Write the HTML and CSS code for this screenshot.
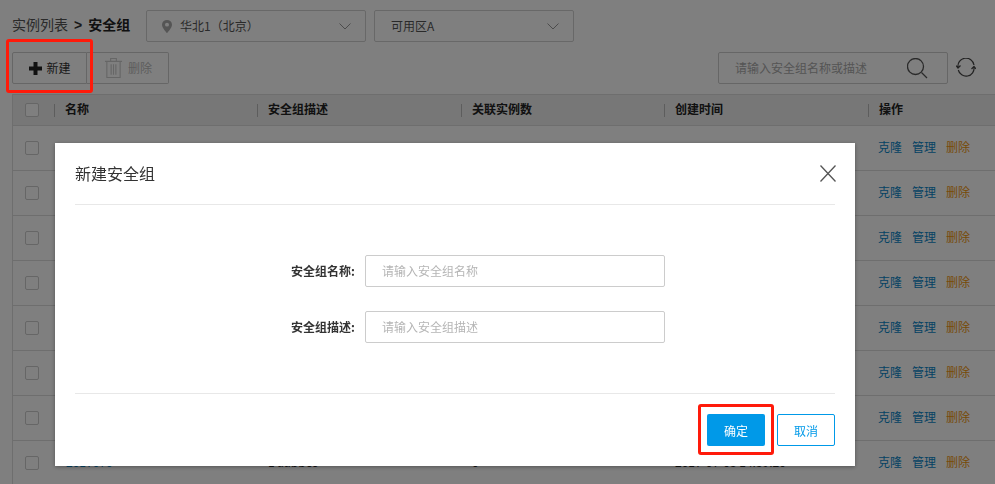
FILE: index.html
```html
<!DOCTYPE html>
<html lang="zh-CN">
<head>
  <meta charset="UTF-8" />
  <title>安全组</title>
  <meta name="viewport" content="width=device-width, initial-scale=1.0">
  <link rel="stylesheet" href="styles.css">
</head>
<body>

  <div class="topbar">
    <div class="crumb">实例列表<b>&gt;</b><strong>安全组</strong></div>
    <div class="select select-region">
      <svg class="pin" width="10" height="13" viewBox="0 0 10 14" preserveAspectRatio="none"><path d="M5 0a5 5 0 0 0-5 5c0 3.500 5 9 5 9s5-5.500 5-9a5 5 0 0 0-5-5zm0 7a2 2 0 1 1 0-4 2 2 0 0 1 0 4z"/></svg>
      <span>华北1（北京）</span>
      <svg class="caret" width="12" height="7" viewBox="0 0 12 7"><path d="M.5.500L6 6l5.500-5.500"/></svg>
    </div>
    <div class="select select-zone">
      <span>可用区A</span>
      <svg class="caret" width="12" height="7" viewBox="0 0 12 7"><path d="M.5.500L6 6l5.500-5.500"/></svg>
    </div>
  </div>

  <div class="toolbar">
    <button class="tool">
      <svg width="13" height="13" viewBox="0 0 13 13"><path d="M4.500 0h4v4.500H13v4H8.500V13h-4V8.500H0v-4h4.500z"/></svg>
      <span>新建</span>
    </button>
    <button class="tool tool-off">
      <svg width="19" height="22" viewBox="0 0 20 22"><path d="M1 4h18M7 4V1h6v3M3 4v17h14V4M7.500 7v11M10 7v11M12.500 7v11"/></svg>
      <span>删除</span>
    </button>
    <div class="search">
      <span>请输入安全组名称或描述</span>
      <svg width="21" height="21" viewBox="0 0 21 21"><circle cx="8.500" cy="8.500" r="8"/><path d="M14.500 14.500l5.500 5.500"/></svg>
    </div>
    <svg class="refresh" width="20" height="19" viewBox="0 0 20 19"><path d="M18 7A8 8 0 0 0 2 9.500M2.300 12A8 8 0 0 0 18 9M0 7.500l2 2.500 2.500-2.500M15.500 11L18 8.500l2 2.500"/></svg>
  </div>

  <div class="table">
    <div class="row head">
      <div class="cell"><i class="check"></i></div>
      <div class="cell"><i class="sep"></i><span>名称</span></div>
      <div class="cell"><i class="sep"></i><span>安全组描述</span></div>
      <div class="cell"><i class="sep"></i><span>关联实例数</span></div>
      <div class="cell"><i class="sep"></i><span>创建时间</span></div>
      <div class="cell"><i class="sep"></i><span>操作</span></div>
    </div>
    <div class="row">
      <div class="cell"><i class="check"></i></div><div class="cell"></div><div class="cell"></div><div class="cell"></div><div class="cell"></div>
      <div class="cell ops"><a>克隆</a><a>管理</a><a class="del">删除</a></div>
    </div>
    <div class="row">
      <div class="cell"><i class="check"></i></div><div class="cell"></div><div class="cell"></div><div class="cell"></div><div class="cell"></div>
      <div class="cell ops"><a>克隆</a><a>管理</a><a class="del">删除</a></div>
    </div>
    <div class="row">
      <div class="cell"><i class="check"></i></div><div class="cell"></div><div class="cell"></div><div class="cell"></div><div class="cell"></div>
      <div class="cell ops"><a>克隆</a><a>管理</a><a class="del">删除</a></div>
    </div>
    <div class="row">
      <div class="cell"><i class="check"></i></div><div class="cell"></div><div class="cell"></div><div class="cell"></div><div class="cell"></div>
      <div class="cell ops"><a>克隆</a><a>管理</a><a class="del">删除</a></div>
    </div>
    <div class="row">
      <div class="cell"><i class="check"></i></div><div class="cell"></div><div class="cell"></div><div class="cell"></div><div class="cell"></div>
      <div class="cell ops"><a>克隆</a><a>管理</a><a class="del">删除</a></div>
    </div>
    <div class="row">
      <div class="cell"><i class="check"></i></div><div class="cell"></div><div class="cell"></div><div class="cell"></div><div class="cell"></div>
      <div class="cell ops"><a>克隆</a><a>管理</a><a class="del">删除</a></div>
    </div>
    <div class="row">
      <div class="cell"><i class="check"></i></div><div class="cell"></div><div class="cell"></div><div class="cell"></div><div class="cell"></div>
      <div class="cell ops"><a>克隆</a><a>管理</a><a class="del">删除</a></div>
    </div>
    <div class="row">
      <div class="cell"><i class="check"></i></div>
      <div class="cell"><a class="name">2017070</a></div>
      <div class="cell txt">1 aabbcc</div>
      <div class="cell txt">0</div>
      <div class="cell txt">2017-07-03 14:39:20</div>
      <div class="cell ops"><a>克隆</a><a>管理</a><a class="del">删除</a></div>
    </div>
  </div>

  <div class="mask"></div>

  <div class="modal">
    <div class="modal-head">
      <span>新建安全组</span>
      <svg width="16" height="17" viewBox="0 0 16 17"><path d="M.5.500l15 16M15.500.500l-15 16"/></svg>
    </div>
    <div class="modal-body">
      <div class="field">
        <label>安全组名称:</label>
        <div class="input">请输入安全组名称</div>
      </div>
      <div class="field">
        <label>安全组描述:</label>
        <div class="input">请输入安全组描述</div>
      </div>
    </div>
    <div class="modal-foot">
      <button class="btn btn-ok">确定</button>
      <button class="btn btn-cancel">取消</button>
    </div>
  </div>

  <div class="mark mark-new"></div>
  <div class="mark mark-ok"></div>

</body>
</html>
```

FILE: styles.css
```css
html, body { height: 100%; }
body {
  margin: 0;
  padding: 10px 0 0 12px;
  box-sizing: border-box;
  overflow: hidden;
  background: #fff;
  color: #333;
  font-family: "Noto Sans CJK SC", "Liberation Sans", sans-serif;
  font-size: 12px;
}

.topbar { display: flex; align-items: center; height: 32px; }
.crumb { width: 134px; padding-bottom: 4px; font-size: 14px; color: #555; white-space: nowrap; }
.crumb b { font-family: "Liberation Sans", sans-serif; margin: 0 6px; color: #333; }
.crumb strong { color: #222; }

.select {
  display: flex;
  align-items: center;
  height: 32px;
  box-sizing: border-box;
  border: 1px solid #d0d0d0;
  border-radius: 2px;
  color: #555;
}
.select span { padding-bottom: 2px; }
.select .caret { margin-left: auto; margin-right: 14px; fill: none; stroke: #999; stroke-width: 1; }
.select-region { width: 220px; padding-left: 15px; margin-right: 8px; }
.select-region .pin { fill: #aaa; margin-right: 8px; }
.select-zone { width: 200px; padding-left: 16px; }

.toolbar { display: flex; align-items: center; height: 32px; margin-top: 10px; }
.tool {
  display: flex;
  align-items: center;
  justify-content: center;
  gap: 4px;
  width: 75px;
  height: 32px;
  padding: 0 0 0 1px;
  border: 1px solid #ccc;
  border-radius: 2px 0 0 2px;
  background: #fff;
  color: #333;
  font: inherit;
}
.tool span { padding-bottom: 2px; }
.tool svg { fill: #222; }
.tool-off {
  width: 82px;
  border-left: none;
  border-radius: 0 2px 2px 0;
  color: #bbb;
  gap: 5px;
}
.tool-off svg { fill: none; stroke: #ccc; stroke-width: 1.2; }

.search {
  display: flex;
  align-items: center;
  justify-content: space-between;
  width: 230px;
  height: 32px;
  box-sizing: border-box;
  margin-left: auto;
  padding: 0 19px 0 16px;
  border: 1px solid #ccc;
  border-radius: 2px;
  color: #aaa;
}
.search span { padding-bottom: 2px; }
.search svg { fill: none; stroke: #555; stroke-width: 1.3; }
.refresh { margin: 0 19px 2px 8px; fill: none; stroke: #444; stroke-width: 1.2; }

.table { margin-top: 10px; border-left: 1px solid #ddd; }
.row {
  display: grid;
  grid-template-columns: 41px 203px 204px 203px 204px 1fr;
  height: 45px;
  border-bottom: 1px solid #ddd;
  box-sizing: border-box;
}
.head {
  height: 32px;
  background: #eee;
  border-top: 1px solid #ddd;
  font-weight: 700;
}
.cell { display: flex; align-items: center; color: #222; padding-bottom: 3px; }
.txt { padding-left: 11px; }
.head .cell { padding-bottom: 0; }
.head .cell span { margin-bottom: 3px; }
.sep { width: 1px; height: 13px; margin-right: 10px; background: #bbb; }
.check {
  display: block;
  width: 12px;
  height: 12px;
  margin: 2px 0 0 12px;
  border: 1px solid #ccc;
  border-radius: 2px;
  background: #fff;
}
.head .check { margin-top: 0; }
.ops { padding-left: 10px; gap: 10px; }
.ops a { color: #0a86c8; }
.ops a.del { color: #f0960e; }
.name { margin-left: 12px; color: #0a86c8; }

.mask { position: fixed; inset: 0; background: rgba(0, 0, 0, 0.5); }

.modal {
  position: fixed;
  left: 55px;
  top: 143px;
  width: 800px;
  height: 323px;
  display: flex;
  flex-direction: column;
  padding: 0 20px;
  box-sizing: border-box;
  background: #fff;
  box-shadow: 0 1px 4px rgba(0, 0, 0, 0.35);
}
.modal-head {
  display: flex;
  align-items: center;
  justify-content: space-between;
  height: 61px;
  border-bottom: 1px solid #e8e8e8;
  font-size: 16px;
  color: #333;
}
.modal-head span { padding-bottom: 2px; }
.modal-head svg { margin-right: -1px; fill: none; stroke: #555; stroke-width: 1.3; }
.modal-body {
  height: 189px;
  box-sizing: border-box;
  padding-top: 50px;
  border-bottom: 1px solid #e8e8e8;
  display: flex;
  flex-direction: column;
  gap: 24px;
}
.field { display: flex; align-items: center; }
.field label { width: 290px; padding: 0 10px 2px 0; box-sizing: border-box; text-align: right; font-weight: 700; color: #333; }
.input {
  width: 300px;
  height: 32px;
  box-sizing: border-box;
  padding-left: 16px;
  line-height: 30px;
  border: 1px solid #ccc;
  border-radius: 2px;
  color: #b5b5b5;
}
.modal-foot { display: flex; justify-content: flex-end; gap: 12px; padding-top: 20px; }
.btn { width: 58px; height: 32px; padding: 0; border-radius: 2px; font: inherit; }
.btn-ok { border: none; background: #0099e8; color: #fff; }
.btn-cancel { border: 1px solid #0099e8; background: #fff; color: #0099e8; }

.mark { position: fixed; box-sizing: border-box; border: 3px solid #ff1a0a; border-radius: 3px; }
.mark-new { left: 6px; top: 39px; width: 87px; height: 54px; }
.mark-ok { left: 698px; top: 404px; width: 76px; height: 51px; }
```
